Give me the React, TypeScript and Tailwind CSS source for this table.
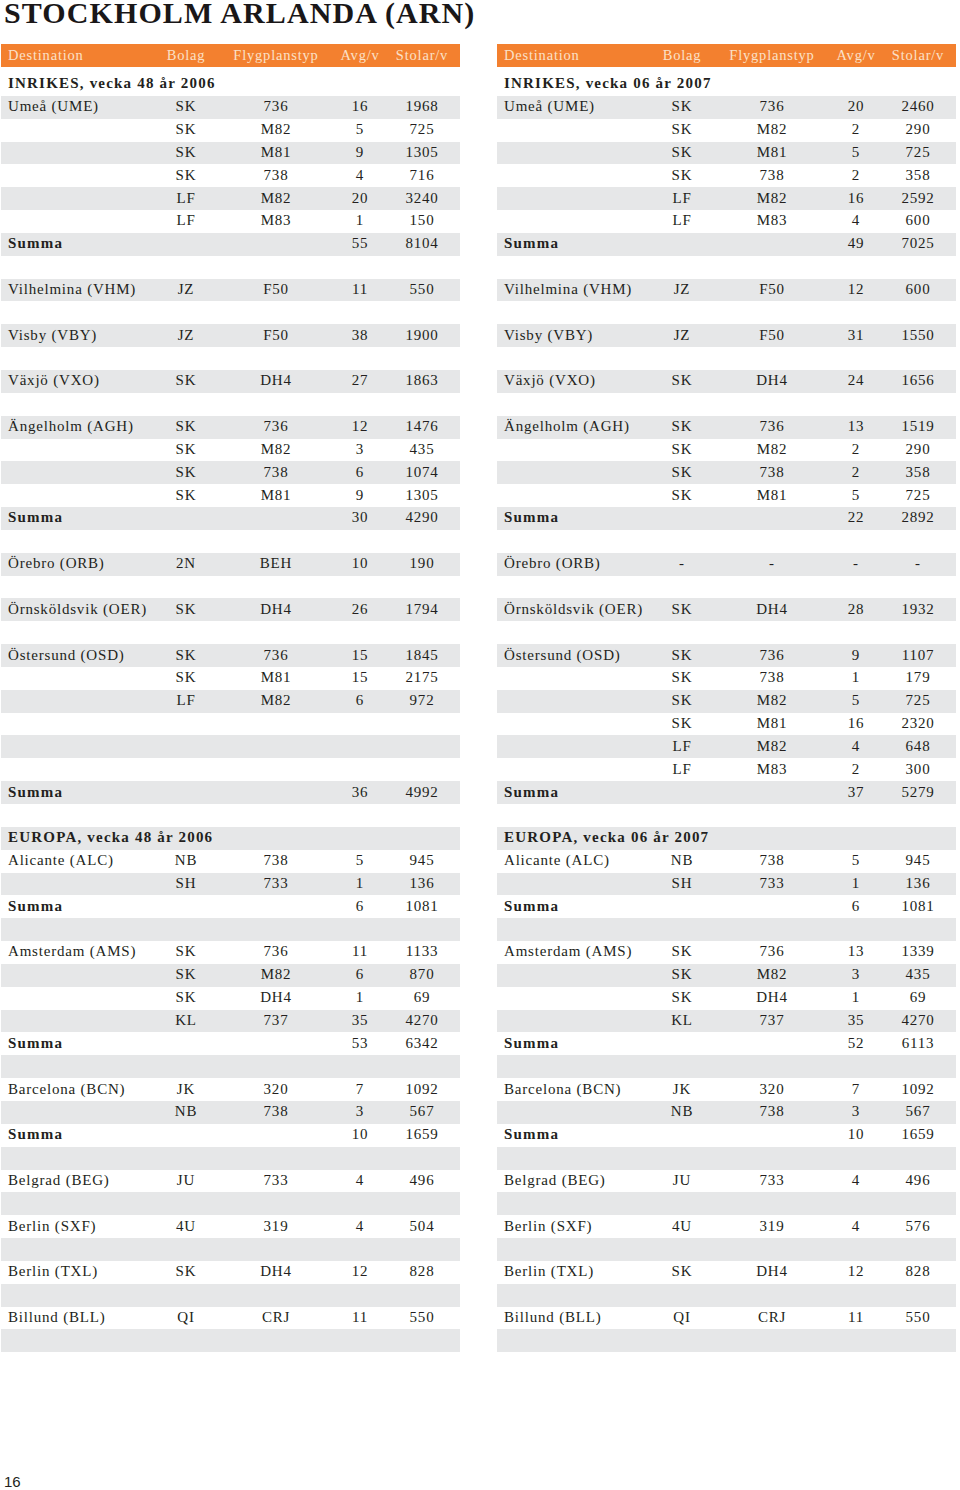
type Row = string[];

// kind markers: "#" section heading, "S" summa, "" empty, otherwise a data row
const left: Row[] = [
  ['#', 'INRIKES, vecka 48 år 2006'],
  ['Umeå (UME)', 'SK', '736', '16', '1968'],
  ['', 'SK', 'M82', '5', '725'],
  ['', 'SK', 'M81', '9', '1305'],
  ['', 'SK', '738', '4', '716'],
  ['', 'LF', 'M82', '20', '3240'],
  ['', 'LF', 'M83', '1', '150'],
  ['S', '55', '8104'],
  [],
  ['Vilhelmina (VHM)', 'JZ', 'F50', '11', '550'],
  [],
  ['Visby (VBY)', 'JZ', 'F50', '38', '1900'],
  [],
  ['Växjö (VXO)', 'SK', 'DH4', '27', '1863'],
  [],
  ['Ängelholm (AGH)', 'SK', '736', '12', '1476'],
  ['', 'SK', 'M82', '3', '435'],
  ['', 'SK', '738', '6', '1074'],
  ['', 'SK', 'M81', '9', '1305'],
  ['S', '30', '4290'],
  [],
  ['Örebro (ORB)', '2N', 'BEH', '10', '190'],
  [],
  ['Örnsköldsvik (OER)', 'SK', 'DH4', '26', '1794'],
  [],
  ['Östersund (OSD)', 'SK', '736', '15', '1845'],
  ['', 'SK', 'M81', '15', '2175'],
  ['', 'LF', 'M82', '6', '972'],
  [],
  [],
  [],
  ['S', '36', '4992'],
  [],
  ['#', 'EUROPA, vecka 48 år 2006'],
  ['Alicante (ALC)', 'NB', '738', '5', '945'],
  ['', 'SH', '733', '1', '136'],
  ['S', '6', '1081'],
  [],
  ['Amsterdam (AMS)', 'SK', '736', '11', '1133'],
  ['', 'SK', 'M82', '6', '870'],
  ['', 'SK', 'DH4', '1', '69'],
  ['', 'KL', '737', '35', '4270'],
  ['S', '53', '6342'],
  [],
  ['Barcelona (BCN)', 'JK', '320', '7', '1092'],
  ['', 'NB', '738', '3', '567'],
  ['S', '10', '1659'],
  [],
  ['Belgrad (BEG)', 'JU', '733', '4', '496'],
  [],
  ['Berlin (SXF)', '4U', '319', '4', '504'],
  [],
  ['Berlin (TXL)', 'SK', 'DH4', '12', '828'],
  [],
  ['Billund (BLL)', 'QI', 'CRJ', '11', '550'],
  [],
];

const right: Row[] = [
  ['#', 'INRIKES, vecka 06 år 2007'],
  ['Umeå (UME)', 'SK', '736', '20', '2460'],
  ['', 'SK', 'M82', '2', '290'],
  ['', 'SK', 'M81', '5', '725'],
  ['', 'SK', '738', '2', '358'],
  ['', 'LF', 'M82', '16', '2592'],
  ['', 'LF', 'M83', '4', '600'],
  ['S', '49', '7025'],
  [],
  ['Vilhelmina (VHM)', 'JZ', 'F50', '12', '600'],
  [],
  ['Visby (VBY)', 'JZ', 'F50', '31', '1550'],
  [],
  ['Växjö (VXO)', 'SK', 'DH4', '24', '1656'],
  [],
  ['Ängelholm (AGH)', 'SK', '736', '13', '1519'],
  ['', 'SK', 'M82', '2', '290'],
  ['', 'SK', '738', '2', '358'],
  ['', 'SK', 'M81', '5', '725'],
  ['S', '22', '2892'],
  [],
  ['Örebro (ORB)', '-', '-', '-', '-'],
  [],
  ['Örnsköldsvik (OER)', 'SK', 'DH4', '28', '1932'],
  [],
  ['Östersund (OSD)', 'SK', '736', '9', '1107'],
  ['', 'SK', '738', '1', '179'],
  ['', 'SK', 'M82', '5', '725'],
  ['', 'SK', 'M81', '16', '2320'],
  ['', 'LF', 'M82', '4', '648'],
  ['', 'LF', 'M83', '2', '300'],
  ['S', '37', '5279'],
  [],
  ['#', 'EUROPA, vecka 06 år 2007'],
  ['Alicante (ALC)', 'NB', '738', '5', '945'],
  ['', 'SH', '733', '1', '136'],
  ['S', '6', '1081'],
  [],
  ['Amsterdam (AMS)', 'SK', '736', '13', '1339'],
  ['', 'SK', 'M82', '3', '435'],
  ['', 'SK', 'DH4', '1', '69'],
  ['', 'KL', '737', '35', '4270'],
  ['S', '52', '6113'],
  [],
  ['Barcelona (BCN)', 'JK', '320', '7', '1092'],
  ['', 'NB', '738', '3', '567'],
  ['S', '10', '1659'],
  [],
  ['Belgrad (BEG)', 'JU', '733', '4', '496'],
  [],
  ['Berlin (SXF)', '4U', '319', '4', '576'],
  [],
  ['Berlin (TXL)', 'SK', 'DH4', '12', '828'],
  [],
  ['Billund (BLL)', 'QI', 'CRJ', '11', '550'],
  [],
];

const cols = 'grid grid-cols-[150px_70px_110px_58px_66px_1fr] items-center';

function TableRow({ row, index }: { row: Row; index: number }) {
  const bg = index % 2 === 1 ? 'bg-[#e6e7e8]' : 'bg-white';
  const base = `${cols} h-[22.85px] pb-[1px] ${bg}`;

  if (row.length === 0) return <div className={base} />;

  if (row[0] === '#') {
    return (
      <div className={base}>
        <div className="col-span-6 pl-[7px] font-bold tracking-[1.2px] whitespace-nowrap">{row[1]}</div>
      </div>
    );
  }

  if (row[0] === 'S') {
    return (
      <div className={base}>
        <div className="pl-[7px] font-bold tracking-[1.2px]">Summa</div>
        <div />
        <div />
        <div className="text-center">{row[1]}</div>
        <div className="text-center">{row[2]}</div>
      </div>
    );
  }

  return (
    <div className={base}>
      <div className="pl-[7px] whitespace-nowrap">{row[0]}</div>
      <div className="text-center">{row[1]}</div>
      <div className="text-center">{row[2]}</div>
      <div className="text-center">{row[3]}</div>
      <div className="text-center">{row[4]}</div>
    </div>
  );
}

function Table({ rows }: { rows: Row[] }) {
  return (
    <div className="w-[459px]">
      <div className={`${cols} h-[23px] bg-[#f3802f] text-[#fbe0c8] text-[14.5px]`}>
        <div className="pl-[7px]">Destination</div>
        <div className="text-center">Bolag</div>
        <div className="text-center">Flygplanstyp</div>
        <div className="text-center">Avg/v</div>
        <div className="text-center">Stolar/v</div>
      </div>
      <div className="mt-[6px]">
        {rows.map((r, i) => (
          <TableRow key={i} row={r} index={i} />
        ))}
      </div>
    </div>
  );
}

export default function App() {
  return (
    <div className="w-[960px] h-[1490px] bg-white text-[#231f20] font-['Liberation_Serif',serif] text-[15px] tracking-[0.8px] leading-none">
      <h1 className="pl-[4px] text-[30px] leading-[26px] font-bold tracking-[1.1px] text-[#1a1718]">
        STOCKHOLM ARLANDA (ARN)
      </h1>
      <div className="mt-[18px] flex gap-[37px] pl-[1px]">
        <Table rows={left} />
        <Table rows={right} />
      </div>
      <div className="mt-[122px] pl-[4px] font-['Liberation_Sans',sans-serif] text-[15px] tracking-normal leading-[15px]">
        16
      </div>
    </div>
  );
}
